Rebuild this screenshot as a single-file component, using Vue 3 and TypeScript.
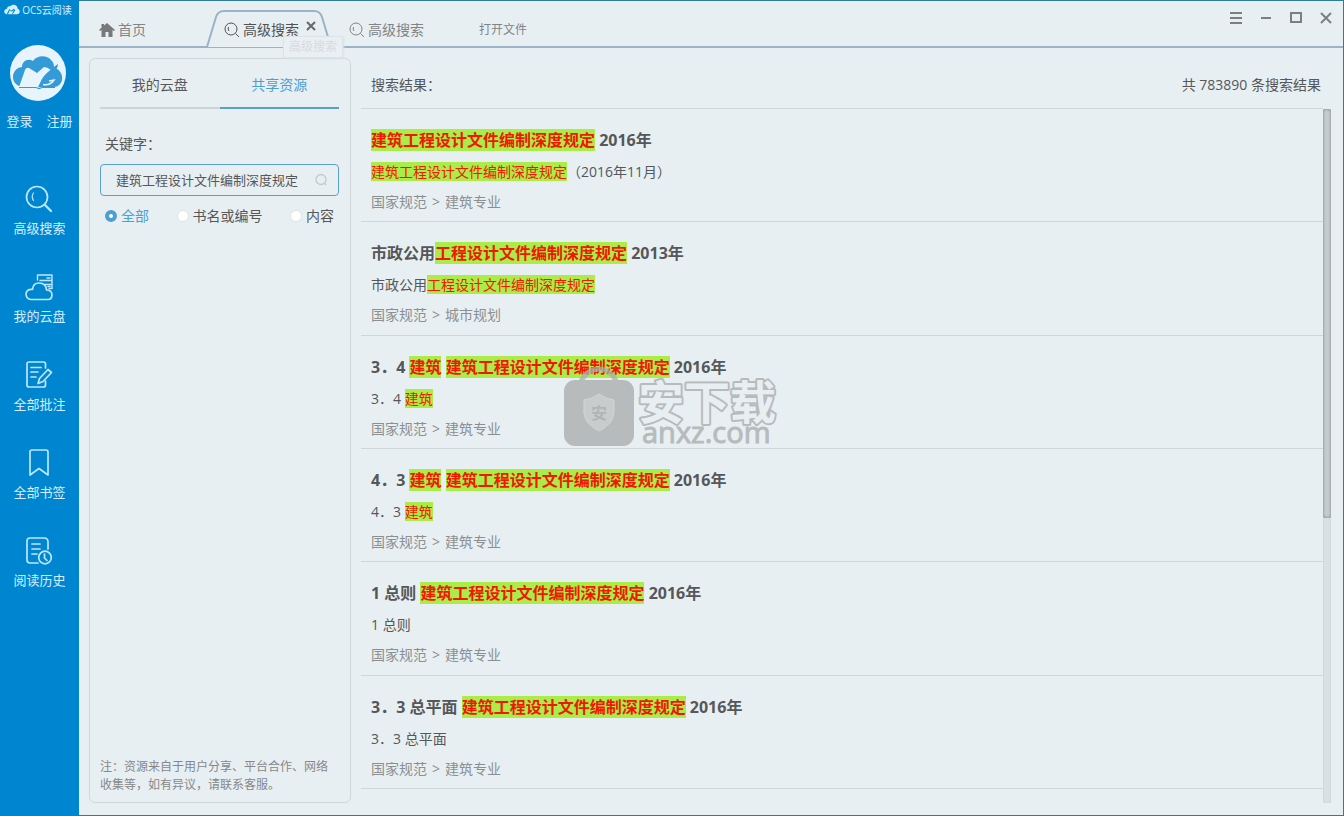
<script setup lang="ts">
import { ref } from 'vue'

interface Part { text: string; hit?: boolean }
interface Result { title: Part[]; detail: Part[]; category: string[] }

const nav = [
  { id: 'search', label: '高级搜索' },
  { id: 'cloud', label: '我的云盘' },
  { id: 'notes', label: '全部批注' },
  { id: 'bookmark', label: '全部书签' },
  { id: 'history', label: '阅读历史' },
]

const scopes = ['全部', '书名或编号', '内容']
const scope = ref('全部')
const keyword = ref('建筑工程设计文件编制深度规定')
const full = '建筑工程设计文件编制深度规定'

const results: Result[] = [
  {
    title: [{ text: full, hit: true }, { text: ' 2016年' }],
    detail: [{ text: full, hit: true }, { text: '（2016年11月）' }],
    category: ['国家规范', '建筑专业'],
  },
  {
    title: [{ text: '市政公用' }, { text: '工程设计文件编制深度规定', hit: true }, { text: ' 2013年' }],
    detail: [{ text: '市政公用' }, { text: '工程设计文件编制深度规定', hit: true }],
    category: ['国家规范', '城市规划'],
  },
  {
    title: [{ text: '3．4 ' }, { text: '建筑', hit: true }, { text: ' ' }, { text: full, hit: true }, { text: ' 2016年' }],
    detail: [{ text: '3．4 ' }, { text: '建筑', hit: true }],
    category: ['国家规范', '建筑专业'],
  },
  {
    title: [{ text: '4．3 ' }, { text: '建筑', hit: true }, { text: ' ' }, { text: full, hit: true }, { text: ' 2016年' }],
    detail: [{ text: '4．3 ' }, { text: '建筑', hit: true }],
    category: ['国家规范', '建筑专业'],
  },
  {
    title: [{ text: '1 总则 ' }, { text: full, hit: true }, { text: ' 2016年' }],
    detail: [{ text: '1 总则' }],
    category: ['国家规范', '建筑专业'],
  },
  {
    title: [{ text: '3．3 总平面 ' }, { text: full, hit: true }, { text: ' 2016年' }],
    detail: [{ text: '3．3 总平面' }],
    category: ['国家规范', '建筑专业'],
  },
]
</script>

<template>
  <div class="app">
    <aside class="sidebar">
      <div class="brand">
        <svg width="16" height="12" viewBox="0 0 48 34" aria-hidden="true">
          <path fill="#d3efff" d="M10 30C3 29 0 25 1 20C2 15 6 13 9 13C9 7 14 4 19 6C23 1 32 0 37 4C40 7 41 10 41 13C46 15 48 19 47 24C46 28 43 30 39 30Z" />
          <path fill="#0086d1" d="M8 30L16 14L22 19L29 13L34 17L26 30Z" />
          <path fill="#d3efff" d="M12 29L18 18L23 22L30 17L24 29Z" />
        </svg>
        <span>OCS云阅读</span>
      </div>
      <button class="avatar" aria-label="用户">
        <svg width="52" height="36" viewBox="0 0 52 36" aria-hidden="true">
          <path fill="#359bd8" d="M10 32C3 30 1 26 1 22C1 16 6 12 10 12C10 6 16 3 21 6C25 0 35 0 39 5C42 8 42 10 42 13C48 14 51 20 50 25C49 29 46 32 42 32Z" />
          <path fill="#e7f4fc" d="M7 32L13 15Q14 12 17 13L25 18L32 12Q35 12 39 15Q31 20 28 28L26 32Z" />
          <path fill="#359bd8" d="M46 9Q37 15 33 21Q29 26 28 31L31 29Q38 31 43 24L38 25Q45 21 47 15L42 17Q46 13 46 9Z" />
          <path stroke="#e7f4fc" stroke-width="1.5" fill="none" d="M31 29.500Q38 31 42 25L37 26" />
          <path stroke="#359bd8" stroke-width="1.2" fill="none" d="M7 32.500H24L27 33.500L30 32.500H43" />
        </svg>
      </button>
      <div class="account"><a href="#">登录</a><a href="#">注册</a></div>
      <nav>
        <a v-for="item in nav" :key="item.id" href="#" class="nav-item">
          <svg width="30" height="30" viewBox="0 0 30 30" fill="none" stroke="currentColor" stroke-width="1.7" stroke-linecap="round" stroke-linejoin="round" aria-hidden="true">
            <template v-if="item.id === 'search'">
              <circle cx="13" cy="13" r="10.500" /><path d="M21 21L27 27" stroke-width="2.400" /><path d="M9.500 9Q7 12.500 9.500 16.500" stroke-width="1.200" />
            </template>
            <template v-else-if="item.id === 'cloud'">
              <path d="M7 27.500H24Q28 27.500 28 22.500Q27.500 18 22.500 18Q22 11 15 11Q9 11 8.500 17.500Q2 17 2 22.500Q2.500 27 7 27.500Z" />
              <path d="M13.500 8V3H28V16.500H25M16 8.500H28M20 12.500H28M23 6H26M24 14.500H26" stroke-width="1.400" />
            </template>
            <template v-else-if="item.id === 'notes'">
              <path d="M21.500 8V4Q21.500 2 19.500 2H5Q3 2 3 4V25Q3 27 5 27H19.500Q21.500 27 21.500 25V21" />
              <path d="M7 7.500H17M7 12H14M7 17H12M14 23.500L15.500 18.500L24 9.500L27.500 12.500L19 21.500Z" />
            </template>
            <template v-else-if="item.id === 'bookmark'">
              <path d="M6 27V4Q6 2 8 2H22Q24 2 24 4V27L15 20.500Z" />
            </template>
            <template v-else>
              <path d="M14 27H6Q3 27 3 24V5Q3 2 6 2H20Q24 2 24 6V13" />
              <path d="M8 8H16M8 13H16M8 18H13" /><circle cx="21" cy="21.500" r="6.300" /><path d="M20.500 18V22L23 24.500" />
            </template>
          </svg>
          <span>{{ item.label }}</span>
        </a>
      </nav>
    </aside>

    <div class="main">
      <header class="topbar">
        <button class="tab home">
          <svg width="16" height="14" viewBox="0 0 16 14" aria-hidden="true"><path fill="#77797a" d="M8 0L16 7L15 8L13.500 7V14H9.500V9H6.500V14H2.500V7L1 8L0 7L2.500 4.800V1H5V2.600Z" /></svg>
          首页
        </button>
        <div class="tab active">
          <svg class="tab-shape" width="126" height="38" viewBox="0 0 126 38" aria-hidden="true">
            <path d="M0 37H1L10 7Q12 1 18 1H108Q114 1 116 7L125 37H126" fill="#e8eff3" stroke="#9bb3c6" stroke-width="2" />
          </svg>
          <button class="tab-label">
            <svg class="lens" width="16" height="16" viewBox="0 0 16 16" aria-hidden="true"><circle cx="7" cy="7" r="6" /><path d="M11.500 11.500L15 15M4.500 5Q3.500 7 5 9" /></svg>
            高级搜索
          </button>
          <button class="tab-close" aria-label="关闭标签"><svg width="10" height="10" viewBox="0 0 10 10" aria-hidden="true"><path d="M1 1L9 9M9 1L1 9" stroke="#666869" stroke-width="2" /></svg></button>
          <span class="tooltip" role="tooltip">高级搜索</span>
        </div>
        <button class="tab idle">
          <svg class="lens" width="16" height="16" viewBox="0 0 16 16" aria-hidden="true"><circle cx="7" cy="7" r="6" /><path d="M11.500 11.500L15 15M4.500 5Q3.500 7 5 9" /></svg>
          高级搜索
        </button>
        <button class="tab open-file">打开文件</button>
        <div class="window-controls">
          <button aria-label="菜单"><svg width="14" height="14" viewBox="0 0 14 14"><path d="M1 2H13M1 7H13M1 12H13" /></svg></button>
          <button aria-label="最小化"><svg width="14" height="14" viewBox="0 0 14 14"><path d="M2 7H12" /></svg></button>
          <button aria-label="最大化"><svg width="14" height="14" viewBox="0 0 14 14"><path d="M2 2H12V11H2Z" /></svg></button>
          <button aria-label="关闭"><svg width="14" height="14" viewBox="0 0 14 14"><path d="M2 2L12 12M12 2L2 12" /></svg></button>
        </div>
      </header>

      <div class="content">
        <section class="filters">
          <div class="source-tabs">
            <button>我的云盘</button>
            <button class="selected">共享资源</button>
          </div>
          <label class="field-label" for="keyword">关键字：</label>
          <div class="search-box">
            <input id="keyword" v-model="keyword" type="text" />
            <button aria-label="搜索"><svg width="14" height="14" viewBox="0 0 14 14" fill="none" stroke="#c3cacd" stroke-width="1.300"><circle cx="7" cy="6.500" r="5" /><path d="M10.500 10L12 12" /></svg></button>
          </div>
          <div class="scopes">
            <label v-for="s in scopes" :key="s" :class="{ on: s === scope }">
              <input v-model="scope" type="radio" name="scope" :value="s" />{{ s }}
            </label>
          </div>
          <p class="notice">注：资源来自于用户分享、平台合作、网络收集等，如有异议，请联系客服。</p>
        </section>

        <section class="results">
          <div class="results-head">
            <span>搜索结果：</span>
            <span>共 783890 条搜索结果</span>
          </div>
          <div class="results-body">
            <div class="list">
              <article v-for="(r, i) in results" :key="i" class="result">
                <h2><template v-for="(p, j) in r.title" :key="j"><mark v-if="p.hit">{{ p.text }}</mark><span v-else>{{ p.text }}</span></template></h2>
                <p class="detail"><template v-for="(p, j) in r.detail" :key="j"><mark v-if="p.hit">{{ p.text }}</mark><span v-else>{{ p.text }}</span></template></p>
                <p class="category"><span>{{ r.category[0] }}</span><span>&gt;</span><span>{{ r.category[1] }}</span></p>
              </article>
            </div>
            <div class="track"><div class="thumb"></div></div>
            <svg class="watermark" width="216" height="84" viewBox="0 0 216 84" aria-hidden="true">
              <path d="M17 17Q24 3 36 3Q48 3 54 17" fill="none" stroke="#a9adae" stroke-opacity=".75" stroke-width="5" />
              <rect x="1" y="14" width="70" height="66" rx="11" fill="#b7bbbc" />
              <path d="M36 28Q43 33 51 34V47Q50 58 36 65Q22 58 21 47V34Q29 33 36 28Z" fill="#c8cccd" stroke="#d2d6d7" />
              <text x="28" y="53" class="seal">安</text>
              <text x="75" y="53" class="mark-name">安下载</text>
              <text x="79" y="77" class="mark-url">anxz.com</text>
            </svg>
          </div>
        </section>
      </div>
    </div>
  </div>
</template>

<style>
body { margin: 0; }
</style>

<style scoped>
* { box-sizing: border-box; }
.app {
  display: flex;
  height: 100vh;
  background: #e8eff3;
  color: #555758;
  font: 14px/20px "Open Sans", "Noto Sans CJK SC", sans-serif;
}
button { padding: 0; border: 0; background: none; color: inherit; font: inherit; cursor: pointer; }
a { color: inherit; text-decoration: none; }
h2, p { margin: 0; }
svg { display: block; flex: none; }

.sidebar {
  flex: none;
  width: 79px;
  display: flex;
  flex-direction: column;
  align-items: center;
  background: #0086d1;
  color: #d3efff;
  font-size: 13px;
}
.brand { display: flex; align-items: center; gap: 2px; height: 20px; padding-right: 3px; font-size: 10px; white-space: nowrap; }
.avatar {
  display: flex;
  align-items: center;
  justify-content: center;
  width: 56px;
  height: 56px;
  margin: 25px 3px 0 0;
  border-radius: 50%;
  background: #e7f4fc;
}
.account { display: flex; gap: 14px; margin-top: 10px; }
nav { display: flex; flex-direction: column; gap: 36px; margin-top: 53px; }
.nav-item { display: flex; flex-direction: column; align-items: center; gap: 5px; height: 52px; }
.nav-item span { line-height: 18px; }
.nav-item svg { color: #bde7fc; }

.main {
  flex: 1;
  min-width: 0;
  display: flex;
  flex-direction: column;
  border: solid #2f7d9b;
  border-width: 1px 1px 1px 0;
}
.topbar { flex: none; display: flex; height: 47px; border-bottom: 2px solid #9bb3c6; color: #818485; }
.tab { display: flex; align-items: center; gap: 3px; padding-top: 12px; white-space: nowrap; }
.lens { fill: none; stroke: currentColor; stroke-width: 1; }
.home { width: 127px; padding-left: 20px; }
.active { position: relative; width: 126px; margin-bottom: -2px; padding-left: 18px; padding-bottom: 2px; gap: 7px; color: #505354; }
.tab-shape { position: absolute; left: 0; bottom: 0; }
.tab-label { position: relative; display: flex; align-items: center; gap: 3px; }
.tab-close { position: relative; padding-bottom: 8px; }
.tooltip {
  position: absolute;
  left: 77px;
  top: 35px;
  z-index: 2;
  padding: 0 5px;
  border: 1px solid #dde4e8;
  background: #e9eff3;
  box-shadow: 1px 1px 2px #dce3e7;
  color: #d6dce0;
  font-size: 12px;
}
.idle { margin-left: 17px; }
.open-file { margin-left: 55px; font-size: 12px; }
.window-controls { display: flex; align-items: center; gap: 16px; height: 34px; margin-left: auto; padding-right: 10px; }
.window-controls svg { fill: none; stroke: #7b7f81; stroke-width: 2; }

.content { flex: 1; min-height: 0; display: flex; gap: 10px; padding: 10px 12px 12px 10px; }
.filters {
  flex: none;
  width: 262px;
  display: flex;
  flex-direction: column;
  padding: 0 11px 8px 10px;
  border: 1px solid #d0d7da;
  border-radius: 6px;
}
.source-tabs { display: flex; height: 50px; }
.source-tabs button { flex: 1; padding-top: 4px; border-bottom: 2px solid #cdd4d7; }
.source-tabs .selected { border-color: #5b9fc3; color: #4c9fd0; }
.field-label { margin: 25px 5px 10px; }
.search-box { display: flex; align-items: center; height: 32px; border: 1px solid #5aa0cc; border-radius: 4px; }
.search-box input {
  flex: 1;
  min-width: 0;
  padding: 0 0 0 15px;
  border: 0;
  outline: 0;
  background: none;
  color: #555758;
  font: inherit;
  font-size: 13px;
}
.search-box button { padding: 0 10px 0 6px; }
.scopes { display: flex; justify-content: space-between; padding: 0 5px; margin-top: 10px; }
.scopes label { display: flex; align-items: center; gap: 4px; }
.scopes input { appearance: none; width: 12px; height: 12px; margin: 0; border: 1px solid #e0e4e6; border-radius: 50%; background: #fff; }
.scopes .on { color: #4c9fd0; }
.scopes .on input { border: 4px solid #4c9fd0; }
.notice { margin-top: auto; color: #858889; font-size: 12px; line-height: 18px; }

.results { flex: 1; min-width: 0; display: flex; flex-direction: column; }
.results-head {
  flex: none;
  display: flex;
  justify-content: space-between;
  align-items: center;
  height: 51px;
  margin-right: 8px;
  padding: 4px 2px 0 10px;
  border-bottom: 1px solid #d0d7da;
}
.results-body { position: relative; flex: 1; min-height: 0; display: flex; }
.list { flex: 1; min-width: 0; display: flex; flex-direction: column; padding-bottom: 14px; overflow: hidden; }
.result { flex: 1 0 auto; padding: 20px 10px 7px; border-bottom: 1px solid #d0d7da; }
.result h2 { font-size: 16px; line-height: 22px; font-weight: 700; white-space: pre-wrap; }
.detail { margin-top: 11px; white-space: pre-wrap; }
.category { display: flex; gap: 5px; margin-top: 10px; color: #8b8f90; }
mark { background: #aaec48; color: #f01800; }
.track { flex: none; width: 8px; border-radius: 2px; background: #dae1e4; box-shadow: inset 0 0 2px #bcc5c8; }
.thumb { height: 59%; border-radius: 2px; background: #c5cccf; box-shadow: inset 0 0 3px #72797c; }
.watermark { position: absolute; left: 202px; top: 257px; pointer-events: none; }
.watermark text { font-family: "Open Sans", "Noto Sans CJK SC", sans-serif; }
.seal { font-size: 16px; font-weight: 700; fill: #b1b5b6; }
.mark-name {
  font-size: 46px;
  font-weight: 700;
  fill: #e8eff3;
  stroke: #b7bbbc;
  stroke-width: 4px;
  stroke-linejoin: round;
  paint-order: stroke;
}
.mark-url { font-size: 29px; font-weight: 400; fill: #b7bbbc; stroke: #b7bbbc; stroke-width: 1px; }
</style>
